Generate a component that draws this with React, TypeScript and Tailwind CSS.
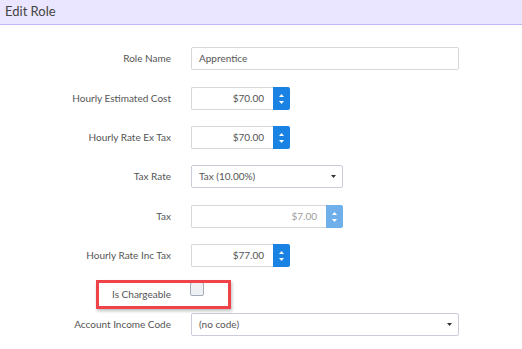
import React from 'react';

function Spinner({ disabled }: { disabled?: boolean }) {
    return (
        <div
            className={`flex w-[17px] flex-col items-center justify-center gap-[4px] rounded-r-[2px] ${disabled ? 'bg-[#70b0ea]' : 'bg-[#1a82e2]'}`}
        >
            <svg width="5" height="3" viewBox="0 0 5 3">
                <path d="M2.5 0 L5 3 L0 3 Z" fill="#ffffff" />
            </svg>
            <svg width="5" height="3" viewBox="0 0 5 3">
                <path d="M0 0 L5 0 L2.5 3 Z" fill="#ffffff" />
            </svg>
        </div>
    );
}

function Caret() {
    return (
        <svg width="5" height="3" viewBox="0 0 5 3">
            <path d="M0 0 L5 0 L2.5 3 Z" fill="#333333" />
        </svg>
    );
}

function Row({ label, children, className = '' }: { label: string; children: React.ReactNode; className?: string }) {
    return (
        <div className={`flex items-center ${className}`}>
            <div className="w-[171px] text-right text-[#555]">{label}</div>
            <div className="ml-[20px] flex">{children}</div>
        </div>
    );
}

function MoneyInput({ value, width, disabled }: { value: string; width: string; disabled?: boolean }) {
    return (
        <div className="flex h-[23px]">
            <div
                className={`flex items-center justify-end rounded-l-[2px] border border-r-0 border-[#d6d6dc] bg-white pr-[9px] ${width} ${disabled ? 'text-[#a0a0a0]' : 'text-[#555]'}`}
            >
                {value}
            </div>
            <Spinner disabled={disabled} />
        </div>
    );
}

export default function App() {
    return (
        <div className="h-[349px] w-[522px] overflow-hidden bg-white text-[10px] font-['Lato',sans-serif]">
            <div className="flex h-[25px] items-center border-b-[1.5px] border-[#c3b6f7] bg-[#ebe6ff] pl-[5px] text-[13px] text-[#444]">
                Edit Role
            </div>

            <Row label="Role Name" className="mt-[22px]">
                <div className="flex h-[23px] w-[268px] items-center rounded-[2px] border border-[#d6d6dc] pl-[7px] text-[#555]">
                    Apprentice
                </div>
            </Row>

            <Row label="Hourly Estimated Cost" className="mt-[17px]">
                <MoneyInput value="$70.00" width="w-[82px]" />
            </Row>

            <Row label="Hourly Rate Ex Tax" className="mt-[16px]">
                <MoneyInput value="$70.00" width="w-[82px]" />
            </Row>

            <Row label="Tax Rate" className="mt-[16px]">
                <div className="flex h-[23px] w-[152px] items-center justify-between rounded-[2px] border border-[#cfcad9] pl-[7px] pr-[6px] text-[#555]">
                    <span>Tax (10.00%)</span>
                    <Caret />
                </div>
            </Row>

            <Row label="Tax" className="mt-[17px]">
                <MoneyInput value="$7.00" width="w-[135px]" disabled />
            </Row>

            <Row label="Hourly Rate Inc Tax" className="mt-[16px]">
                <MoneyInput value="$77.00" width="w-[82px]" />
            </Row>

            <div className="relative mt-[13px] h-[29px]">
                <div className="absolute left-[96px] top-0 h-[29px] w-[135px] border-[3px] border-[#f04349] shadow-[1px_2px_3px_rgba(0,0,0,0.25)]" />
                <Row label="Is Chargeable" className="h-[29px]">
                    <div className="-ml-[1px] -mt-[11px] h-[14px] w-[14px] rounded-[2px] border border-[#a3abb6] bg-[#eef0f3]" />
                </Row>
            </div>

            <Row label="Account Income Code" className="mt-[4px]">
                <div className="flex h-[23px] w-[268px] items-center justify-between rounded-[2px] border border-[#cfcad9] pl-[7px] pr-[6px] text-[#555]">
                    <span>(no code)</span>
                    <Caret />
                </div>
            </Row>
        </div>
    );
}
